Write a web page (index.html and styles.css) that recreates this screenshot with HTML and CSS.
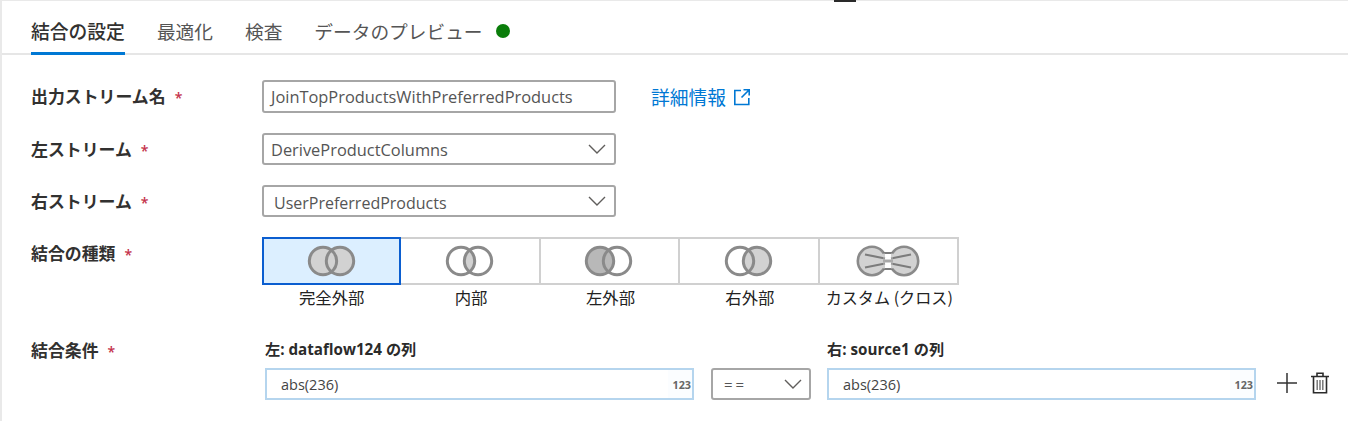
FILE: index.html
```html
<!DOCTYPE html>
<html lang="ja">
<head>
<meta charset="utf-8">
<title>結合の設定</title>
<link rel="stylesheet" href="styles.css">
</head>
<body>
<div class="panel">
  <span class="top-mark"></span>
  <nav class="tabs">
    <a class="tab active">結合の設定</a>
    <a class="tab">最適化</a>
    <a class="tab">検査</a>
    <a class="tab">データのプレビュー<span class="dot"></span></a>
  </nav>
  <div class="form">
    <div class="row row-name">
      <label class="label">出力ストリーム名<span class="req">*</span></label>
      <div class="field">JoinTopProductsWithPreferredProducts</div>
      <a class="link">詳細情報
        <svg class="ext" width="20" height="20" viewBox="0 0 20 20" fill="none" stroke="#0078d4" stroke-width="1.6"><path d="M9 3.5H2.8v14h14V11"/><path d="M11.5 2.8h5.7v5.7M17 3 9.5 10.5"/></svg>
      </a>
    </div>
    <div class="row row-left">
      <label class="label">左ストリーム<span class="req">*</span></label>
      <div class="field select"><span>DeriveProductColumns</span>
        <svg class="chev" width="18" height="10" viewBox="0 0 18 10" fill="none" stroke="#605e5c" stroke-width="1.4"><path d="M1 1l8 8 8-8"/></svg>
      </div>
    </div>
    <div class="row row-right">
      <label class="label">右ストリーム<span class="req">*</span></label>
      <div class="field select shifted"><span>UserPreferredProducts</span>
        <svg class="chev" width="18" height="10" viewBox="0 0 18 10" fill="none" stroke="#605e5c" stroke-width="1.4"><path d="M1 1l8 8 8-8"/></svg>
      </div>
    </div>
    <div class="row row-type">
      <label class="label">結合の種類<span class="req">*</span></label>
      <div class="joins">
        <div class="join">
          <div class="tile selected">
            <svg width="50" height="32" viewBox="0 0 50 32"><circle cx="16" cy="16" r="13.7" fill="#d2d2d2" stroke="#8a8a8a" stroke-width="3"/><circle cx="33" cy="16" r="13.7" fill="#d2d2d2" stroke="#8a8a8a" stroke-width="3"/><path d="M24.5 5.3a13.7 13.7 0 0 1 0 21.4" fill="none" stroke="#8a8a8a" stroke-width="3"/></svg>
          </div>
          <span class="cap">完全外部</span>
        </div>
        <div class="join">
          <div class="tile">
            <svg width="50" height="32" viewBox="0 0 50 32"><path d="M24.5 5.3a13.7 13.7 0 0 1 0 21.4a13.7 13.7 0 0 1 0-21.4z" fill="#d2d2d2"/><circle cx="16" cy="16" r="13.7" fill="none" stroke="#8a8a8a" stroke-width="3"/><circle cx="33" cy="16" r="13.7" fill="none" stroke="#8a8a8a" stroke-width="3"/></svg>
          </div>
          <span class="cap">内部</span>
        </div>
        <div class="join">
          <div class="tile">
            <svg width="50" height="32" viewBox="0 0 50 32"><circle cx="16" cy="16" r="13.7" fill="#b8b8b8" stroke="#8a8a8a" stroke-width="3"/><circle cx="33" cy="16" r="13.7" fill="none" stroke="#8a8a8a" stroke-width="3"/></svg>
          </div>
          <span class="cap">左外部</span>
        </div>
        <div class="join">
          <div class="tile">
            <svg width="50" height="32" viewBox="0 0 50 32"><circle cx="33" cy="16" r="13.7" fill="#d2d2d2" stroke="#8a8a8a" stroke-width="3"/><circle cx="16" cy="16" r="13.7" fill="none" stroke="#8a8a8a" stroke-width="3"/></svg>
          </div>
          <span class="cap">右外部</span>
        </div>
        <div class="join">
          <div class="tile">
            <svg width="68" height="32" viewBox="0 0 68 32"><circle cx="18" cy="16" r="14.2" fill="#d2d2d2" stroke="#8a8a8a" stroke-width="2.6"/><circle cx="50" cy="16" r="14.2" fill="#d2d2d2" stroke="#8a8a8a" stroke-width="2.6"/><path d="M29 8h10v16H29z" fill="#fff"/><path d="M29 14.5h10v3H29z" fill="#a8a8a8"/><path d="M11 9.5 31 13.5M11 22.5 31 18.5M57 9.5 37 13.5M57 22.5 37 18.5M29 8h10M29 24h10" fill="none" stroke="#7c7c7c" stroke-width="2.2"/><path d="M30 8v16M38 8v16" fill="none" stroke="#b0b0b0" stroke-width="1.2"/></svg>
          </div>
          <span class="cap">カスタム (クロス)</span>
        </div>
      </div>
    </div>
    <div class="row row-cond">
      <label class="label">結合条件<span class="req">*</span></label>
      <div class="cond">
        <div class="col col-main">
          <span class="col-title">左: dataflow124 の列</span>
          <div class="expr">abs(236)<span class="badge">123</span></div>
        </div>
        <div class="col-op">
          <div class="op">==
            <svg class="chev" width="18" height="10" viewBox="0 0 18 10" fill="none" stroke="#605e5c" stroke-width="1.4"><path d="M1 1l8 8 8-8"/></svg>
          </div>
        </div>
        <div class="col col-main">
          <span class="col-title">右: source1 の列</span>
          <div class="expr">abs(236)<span class="badge">123</span></div>
        </div>
        <div class="actions">
          <svg width="20" height="20" viewBox="0 0 20 20" fill="none" stroke="#333" stroke-width="1.5"><path d="M10 0v20M0 10h20"/></svg>
          <svg width="18" height="22" viewBox="0 0 18 22" fill="none" stroke="#2b2b2b" stroke-width="1.6"><path d="M0 4.5h18M6 4V1.2h6V4"/><path d="M2.5 4.5v16.3h13V4.5"/><path d="M6.2 8v10M9 8v10M11.8 8v10" stroke="#777" stroke-width="1.5"/></svg>
        </div>
      </div>
    </div>
  </div>
</div>
</body>
</html>
```
FILE: styles.css
```css
* { box-sizing: border-box; }
html, body { margin: 0; padding: 0; background: #fff; }
body {
  height: 421px;
  overflow: hidden;
  font-family: "Open Sans", "Noto Sans CJK JP", sans-serif;
  color: #323130;
}
.panel {
  position: relative;
  height: 421px;
  border-left: 2px solid #e9e9e9;
  border-top: 1px solid #e9e9e9;
}
.top-mark {
  position: absolute;
  left: 832px;
  top: -1px;
  width: 22px;
  height: 2px;
  background: #2a2a2a;
}
.tabs {
  display: flex;
  height: 54px;
  padding-left: 29px;
  gap: 32px;
  border-bottom: 2px solid #e6e6e6;
}
.tab {
  display: flex;
  align-items: center;
  height: 54px;
  padding-top: 8px;
  font-family: "Noto Sans CJK JP", sans-serif;
  font-size: 18.7px;
  color: #555;
  border-bottom: 3px solid transparent;
}
.tab.active {
  color: #323130;
  font-weight: 500;
  font-size: 18.8px;
  border-bottom-color: #0078d4;
}
.dot {
  width: 14px;
  height: 14px;
  margin-left: 13px;
  border-radius: 50%;
  background: #0a7d0a;
}
.form { padding: 25px 0 0 29px; }
.row { display: flex; align-items: flex-start; }
.row-name { height: 53px; }
.row-left { height: 52px; }
.row-right { height: 52px; }
.row-type { height: 97px; }
.label {
  flex: none;
  width: 231px;
  padding-top: 4px;
  font-family: "Noto Sans CJK JP", sans-serif;
  font-size: 16.9px;
  line-height: 24px;
  font-weight: 700;
  color: #323130;
}
.req {
  margin-left: 9px;
  font-family: "Open Sans", sans-serif;
  font-size: 14px;
  font-weight: 600;
  color: #c4314b;
}
.field {
  display: flex;
  align-items: center;
  justify-content: space-between;
  width: 354px;
  height: 33px;
  padding: 0 7px;
  border: 2px solid #a6a6a6;
  border-radius: 3px;
  font-size: 16.4px;
  color: #555;
}
.field.select { height: 32px; padding-right: 8px; }
.field.shifted { font-size: 16px; }
.field.shifted span { padding: 3px 0 0 3px; }
.link {
  display: flex;
  align-items: center;
  gap: 6px;
  margin-left: 35px;
  height: 33px;
  font-family: "Noto Sans CJK JP", sans-serif;
  font-size: 18.8px;
  color: #0078d4;
}
.joins { display: flex; }
.join {
  display: flex;
  flex-direction: column;
  align-items: center;
  width: 139.4px;
}
.tile {
  display: flex;
  align-items: center;
  justify-content: center;
  width: 100%;
  height: 48px;
  border: 2px solid #d0d0d0;
  border-left-width: 0;
}
.tile.selected {
  background: #dcefff;
  border: 2px solid #0b5ed0;
}
.cap {
  font-family: "Noto Sans CJK JP", sans-serif;
  font-size: 16.4px;
  line-height: 24px;
  color: #222;
}
.join:last-child .cap { font-size: 16.1px; white-space: nowrap; }
.cond { display: flex; align-items: flex-start; margin-left: 3px; }
.col { display: flex; flex-direction: column; }
.col-main { width: 429px; }
.col-title {
  height: 34px;
  padding-top: 4px;
  font-family: "Open Sans", "Noto Sans CJK JP", sans-serif;
  font-size: 15.2px;
  line-height: 22px;
  font-weight: 700;
  color: #2b2b2b;
}
.expr {
  display: flex;
  align-items: center;
  justify-content: space-between;
  height: 32px;
  padding: 0 0 0 14px;
  border: 2px solid #b5d5ee;
  font-size: 14.5px;
  color: #444;
}
.badge {
  display: flex;
  align-items: center;
  height: 100%;
  padding: 0 1px 0 4px;
  background: #fbfdff;
  font-size: 10.8px;
  font-weight: 700;
  color: #666;
}
.col-op { padding: 34px 16px 0 17px; }
.op {
  display: flex;
  align-items: center;
  justify-content: space-between;
  width: 100px;
  height: 32px;
  padding: 0 7px 0 11px;
  border: 2px solid #a6a6a6;
  border-radius: 3px;
  font-size: 15px;
  letter-spacing: 3px;
  color: #555;
}
.actions {
  display: flex;
  align-items: center;
  gap: 14px;
  margin-left: 21px;
  padding-top: 38px;
}
```
